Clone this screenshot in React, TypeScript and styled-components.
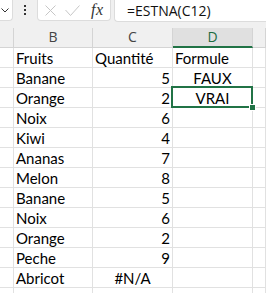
import React from 'react';
import styled, { createGlobalStyle } from 'styled-components';

const GlobalStyle = createGlobalStyle`
  body {
    margin: 0;
    background: #ffffff;
  }
`;

type Row = { fruit: string; qty: string; formula?: string; align?: 'right' | 'center' };

const rows: Row[] = [
  { fruit: 'Banane', qty: '5', formula: 'FAUX' },
  { fruit: 'Orange', qty: '2', formula: 'VRAI' },
  { fruit: 'Noix', qty: '6' },
  { fruit: 'Kiwi', qty: '4' },
  { fruit: 'Ananas', qty: '7' },
  { fruit: 'Melon', qty: '8' },
  { fruit: 'Banane', qty: '5' },
  { fruit: 'Noix', qty: '6' },
  { fruit: 'Orange', qty: '2' },
  { fruit: 'Peche', qty: '9' },
  { fruit: 'Abricot', qty: '#N/A', align: 'center' },
  { fruit: '', qty: '' },
];

function App() {
  return (
    <Page>
      <GlobalStyle />
      <FormulaBar>
        <NameBox>
          <svg width="8" height="5" viewBox="0 0 8 5">
            <path d="M0.5 0.5 L4 4 L7.5 0.5" fill="none" stroke="#333" strokeWidth="1" />
          </svg>
        </NameBox>
        <Grip>
          <Dot />
          <Dot />
          <Dot />
        </Grip>
        <EditBox>
          <svg width="11" height="11" viewBox="0 0 11 11">
            <path d="M0.5 0.5 L10.5 10.5 M10.5 0.5 L0.5 10.5" stroke="#c6c6c6" strokeWidth="1" />
          </svg>
          <svg width="15" height="11" viewBox="0 0 15 11">
            <path d="M0.5 5 L5.5 10.5 L14.5 0.5" fill="none" stroke="#c6c6c6" strokeWidth="1" />
          </svg>
          <Fx>fx</Fx>
        </EditBox>
        <FormulaInput>=ESTNA(C12)</FormulaInput>
      </FormulaBar>
      <Sheet>
        <HeadCell />
        <HeadCell>B</HeadCell>
        <HeadCell>C</HeadCell>
        <HeadCell $active>D</HeadCell>
        <HeadCell />

        <Cell />
        <Cell>Fruits</Cell>
        <Cell>Quantité</Cell>
        <Cell>Formule</Cell>
        <Cell />

        {rows.map((r, i) => (
          <React.Fragment key={i}>
            <Cell />
            <Cell>{r.fruit}</Cell>
            <Cell $align={r.align ?? 'right'}>{r.qty}</Cell>
            <Cell $align="center" $selected={r.formula === 'VRAI'}>
              {r.formula}
            </Cell>
            <Cell />
          </React.Fragment>
        ))}
      </Sheet>
    </Page>
  );
}

const Page = styled.div`
  width: 266px;
  height: 293px;
  overflow: hidden;
  background: #ffffff;
`;

const FormulaBar = styled.div`
  display: flex;
  align-items: flex-start;
  height: 28px;
  background: #f0f0f0;
`;

const NameBox = styled.div`
  box-sizing: border-box;
  width: 13px;
  height: 21px;
  background: #ffffff;
  border-right: 1px solid #dcdcdc;
  border-bottom: 1px solid #dcdcdc;
  border-bottom-right-radius: 4px;
  display: flex;
  align-items: center;
  justify-content: flex-start;
  padding-left: 1px;
`;

const Grip = styled.div`
  width: 24px;
  height: 20px;
  display: flex;
  flex-direction: column;
  align-items: center;
  justify-content: center;
  gap: 2px;
`;

const Dot = styled.span`
  width: 2px;
  height: 2px;
  background: #333333;
`;

const EditBox = styled.div`
  box-sizing: border-box;
  width: 74px;
  height: 21px;
  background: #ffffff;
  border: 1px solid #dcdcdc;
  border-top: none;
  border-radius: 0 0 4px 4px;
  display: flex;
  align-items: center;
  padding-left: 7px;
  gap: 9px;
`;

const Fx = styled.span`
  font-family: 'Liberation Serif', serif;
  font-style: italic;
  font-size: 16px;
  color: #333333;
  margin-left: 2px;
  letter-spacing: 0.5px;
`;

const FormulaInput = styled.div`
  box-sizing: border-box;
  flex: 1;
  height: 22px;
  margin-left: 3px;
  background: #ffffff;
  border-left: 1px solid #dcdcdc;
  border-bottom: 1px solid #dcdcdc;
  border-bottom-left-radius: 4px;
  padding-left: 12px;
  font-family: 'Open Sans', sans-serif;
  font-size: 14px;
  line-height: 21px;
  color: #111111;
`;

const Sheet = styled.div`
  display: grid;
  grid-template-columns: 14px 79px 80px 80px 1fr;
  grid-auto-rows: 20px;
`;

const HeadCell = styled.div<{ $active?: boolean }>`
  box-sizing: border-box;
  height: 20px;
  background: ${(p) => (p.$active ? '#e0e0e0' : '#f0f0f0')};
  border-right: 1px solid #d4d4d4;
  border-bottom: ${(p) => (p.$active ? '2px solid #217346' : '1px solid #d4d4d4')};
  color: ${(p) => (p.$active ? '#1d6b3f' : '#444444')};
  font-family: 'Open Sans', sans-serif;
  font-size: 14px;
  line-height: 18px;
  text-align: center;
`;

const Cell = styled.div<{ $align?: 'left' | 'right' | 'center'; $selected?: boolean }>`
  position: relative;
  z-index: ${(p) => (p.$selected ? 2 : 'auto')};
  box-sizing: border-box;
  height: 20px;
  border-right: 1px solid #e1e1e1;
  border-bottom: 1px solid #e1e1e1;
  padding: 0 2px 0 2px;
  font-family: 'Lato', sans-serif;
  font-size: 15px;
  line-height: 21px;
  color: #000000;
  text-align: ${(p) => p.$align ?? 'left'};
  white-space: nowrap;

  ${(p) =>
    p.$selected &&
    `
    &::before {
      content: '';
      position: absolute;
      left: -2px;
      top: -2px;
      right: -1px;
      bottom: -1px;
      border: 2px solid #217346;
    }
    &::after {
      content: '';
      position: absolute;
      right: -4px;
      bottom: -4px;
      width: 7px;
      height: 7px;
      background: #217346;
      border: 1px solid #ffffff;
      box-sizing: border-box;
    }
  `}
`;

export default App;
